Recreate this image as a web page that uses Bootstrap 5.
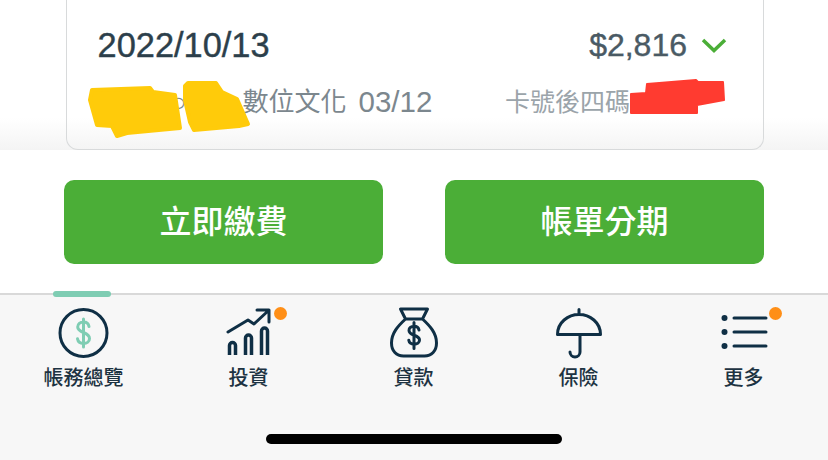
<!DOCTYPE html>
<html lang="zh-Hant">

<head>
    <title>帳務總覽</title>
    <meta charset="utf-8">
    <meta name="viewport" content="width=device-width, initial-scale=1">
    <link href="https://cdn.jsdelivr.net/npm/bootstrap@5.3.3/dist/css/bootstrap.min.css" rel="stylesheet">
    <script src="https://cdn.jsdelivr.net/npm/bootstrap@5.3.3/dist/js/bootstrap.bundle.min.js"></script>
    <style>
        body {
            width: 828px;
            height: 460px;
            overflow: hidden;
            background: #fff;
            font-family: "Liberation Sans", "Noto Sans CJK TC", sans-serif;
        }

        /* bill card, cut off by the top of the screen */
        .bill-area {
            height: 150px;
            padding: 0 64px 0 66px;
            background: linear-gradient(#fff 118px, #f4f4f4 150px);
        }

        .bill-card {
            height: 150px;
            padding: 0 36px 0 30.5px;
            background: transparent;
            border-color: #d8dadb;
            border-width: 0 1.5px 1.5px 1.5px;
            border-radius: 0 0 12px 12px;
        }

        .bill-date {
            height: 32px;
            margin-top: 29px;
            font-size: 34.4px;
            line-height: 32px;
            color: #2c3f4b;
            -webkit-text-stroke: 0.4px currentColor;
        }

        .bill-amount {
            gap: 14px;
            font-size: 32px;
            color: #4a5a64;
        }

        .bill-sub {
            margin-top: 23px;
            font-size: 26px;
            line-height: 36px;
            color: #7c878e;
        }

        .bill-shop {
            width: 336px;
        }

        .bill-hidden {
            width: 145px;
        }

        .bill-period {
            margin-left: 12px;
            font-size: 29.5px;
        }

        .bill-cardno {
            width: 222px;
            font-size: 25px;
            color: #9ba4aa;
        }

        .scribble {
            top: 0;
            left: 0;
        }

        /* pay buttons */
        .pay-row {
            height: 143px;
            padding: 30px 64px;
            gap: 62px;
        }

        .pay-btn {
            width: 319px;
            height: 84px;
            font-size: 32px;
            font-weight: 500;
            line-height: 84px;
            padding: 0;
            border: 0;
            border-radius: 10px;
            color: #fff;
            background: #4bae37;
        }

        /* tab bar */
        .tab-bar {
            height: 167px;
            padding-left: 1px;
            background: #f7f7f7;
            border-top: 2px solid #d9d9d9;
        }

        .tab-item {
            width: 165px;
            padding-top: 10px;
            font-size: 20px;
            font-weight: 500;
            line-height: 28px;
            color: #1d3342;
        }

        .tab-item svg {
            display: block;
            width: 60px;
            height: 56px;
            margin-bottom: 3px;
        }

        .tab-line {
            top: -4px;
            left: 52px;
            width: 58px;
            height: 6px;
            border-radius: 3px;
            background: #7fcdb3;
        }

        .tab-dot {
            top: 11.5px;
            left: 107.5px;
            width: 13px;
            height: 13px;
            border-radius: 50%;
            background: #ff8f17;
        }

        .home-bar {
            left: 266px;
            top: 139px;
            width: 296px;
            height: 10px;
            border-radius: 5px;
            background: #000;
        }

        .ico {
            fill: none;
            stroke: #0f2f45;
            stroke-width: 3;
            stroke-linecap: round;
            stroke-linejoin: round;
        }

        .ico-mint {
            stroke: #7fcdb3;
        }

        .ico-bar {
            stroke-width: 3.5;
            stroke-linecap: butt;
        }
    </style>
</head>

<body>

    <!-- Bill card -->
    <div class="bill-area position-relative">
        <div class="card bill-card">
            <div class="bill-date d-flex justify-content-between align-items-center">
                <span>2022/10/13</span>
                <span class="bill-amount d-flex align-items-center">$2,816
                    <svg width="26" height="16" viewBox="0 0 26 16">
                        <path d="M2 3l11 10.500L24 3" fill="none" stroke="#4bae37" stroke-width="3.5" />
                    </svg>
                </span>
            </div>
            <div class="bill-sub d-flex justify-content-between">
                <span class="bill-shop d-flex align-items-center text-nowrap"><span class="bill-hidden">○○○一○</span>數位文化<span class="bill-period">03/12</span></span>
                <span class="bill-cardno text-nowrap">卡號後四碼 0000</span>
            </div>
        </div>

        <!-- Scribbles over the private data -->
        <svg class="scribble position-absolute" width="828" height="150" viewBox="0 0 828 150">
            <path d="M92 90L150 88 153 92 175 95 180 128 127 133 117 136 112 126 97 125 90 100Z" fill="#ffcb0a"
                stroke="#ffcb0a" stroke-width="4" stroke-linejoin="round" />
            <path d="M185 86L188 83 216 83 222 92 237 99 248 124 239 126 194 130 190 122 185 100Z" fill="#ffcb0a"
                stroke="#ffcb0a" stroke-width="4" stroke-linejoin="round" />
            <path d="M631 94L646 93 647 84 696 80 698 82 723 82 724 100 697 105 697 113 631 113Z" fill="#ff3b30"
                stroke="#ff3b30" stroke-width="2" stroke-linejoin="round" />
        </svg>
    </div>

    <!-- Pay buttons -->
    <div class="pay-row d-flex">
        <button type="button" class="btn pay-btn">立即繳費</button>
        <button type="button" class="btn pay-btn">帳單分期</button>
    </div>

    <!-- Tab bar -->
    <nav class="tab-bar d-flex position-relative">
        <div class="tab-item position-relative d-flex flex-column align-items-center">
            <span class="tab-line position-absolute"></span>
            <svg viewBox="0 0 60 56">
                <circle class="ico" cx="29.500" cy="28" r="23.5" />
                <path class="ico ico-mint" d="M35 21.500c-.5-3-2.700-4.500-5.500-4.500-3.300 0-5.800 2-5.800 5 0 6.500 11.800 4.500 11.800 11.500 0 3-2.600 5-6 5-3 0-5.500-1.700-6-4.700M29.500 14v28" />
            </svg>
            帳務總覽
        </div>
        <div class="tab-item position-relative d-flex flex-column align-items-center">
            <span class="tab-dot position-absolute"></span>
            <svg viewBox="0 0 60 56">
                <path class="ico" d="M9 27l20-12 6 4 14-13M38 5h12v12" />
                <path class="ico ico-bar" d="M10.500 50V40.500a3 3 0 0 1 6 0V50M26.500 50V33a3 3 0 0 1 6 0V50M42.500 50V26a3 3 0 0 1 6 0V50" />
            </svg>
            投資
        </div>
        <div class="tab-item position-relative d-flex flex-column align-items-center">
            <svg viewBox="0 0 60 56">
                <path class="ico" d="M16.500 4h27L38.500 14C46 21 52.500 28 52.500 38c0 8-5 13-12 13h-21c-7 0-12-5-12-13 0-10 6.500-17 14-24ZM21.500 14h17" />
                <path class="ico" d="M35 25c-.5-2.500-2.500-3.700-5-3.700-3 0-5 1.700-5 4.200 0 5.500 10.500 4 10.500 9.500 0 2.500-2.300 4.200-5.300 4.200-2.700 0-5-1.400-5.400-3.900M30 17.500v26" />
            </svg>
            貸款
        </div>
        <div class="tab-item position-relative d-flex flex-column align-items-center">
            <svg viewBox="0 0 60 56">
                <path class="ico" d="M8.500 29.500C8.500 17.500 19 9.500 30 9.500s21.500 8 21.500 20ZM30 4.500v5M31 29.500v17.500a5 5 0 0 1-10 0" />
            </svg>
            保險
        </div>
        <div class="tab-item position-relative d-flex flex-column align-items-center">
            <span class="tab-dot position-absolute"></span>
            <svg viewBox="0 0 60 56">
                <path class="ico" d="M20 13h32M20 27h32M20 41h32" />
                <circle cx="10.500" cy="13" r="3" fill="#0f2f45" />
                <circle cx="10.500" cy="27" r="3" fill="#0f2f45" />
                <circle cx="10.500" cy="41" r="3" fill="#0f2f45" />
            </svg>
            更多
        </div>
        <span class="home-bar position-absolute"></span>
    </nav>

</body>

</html>
